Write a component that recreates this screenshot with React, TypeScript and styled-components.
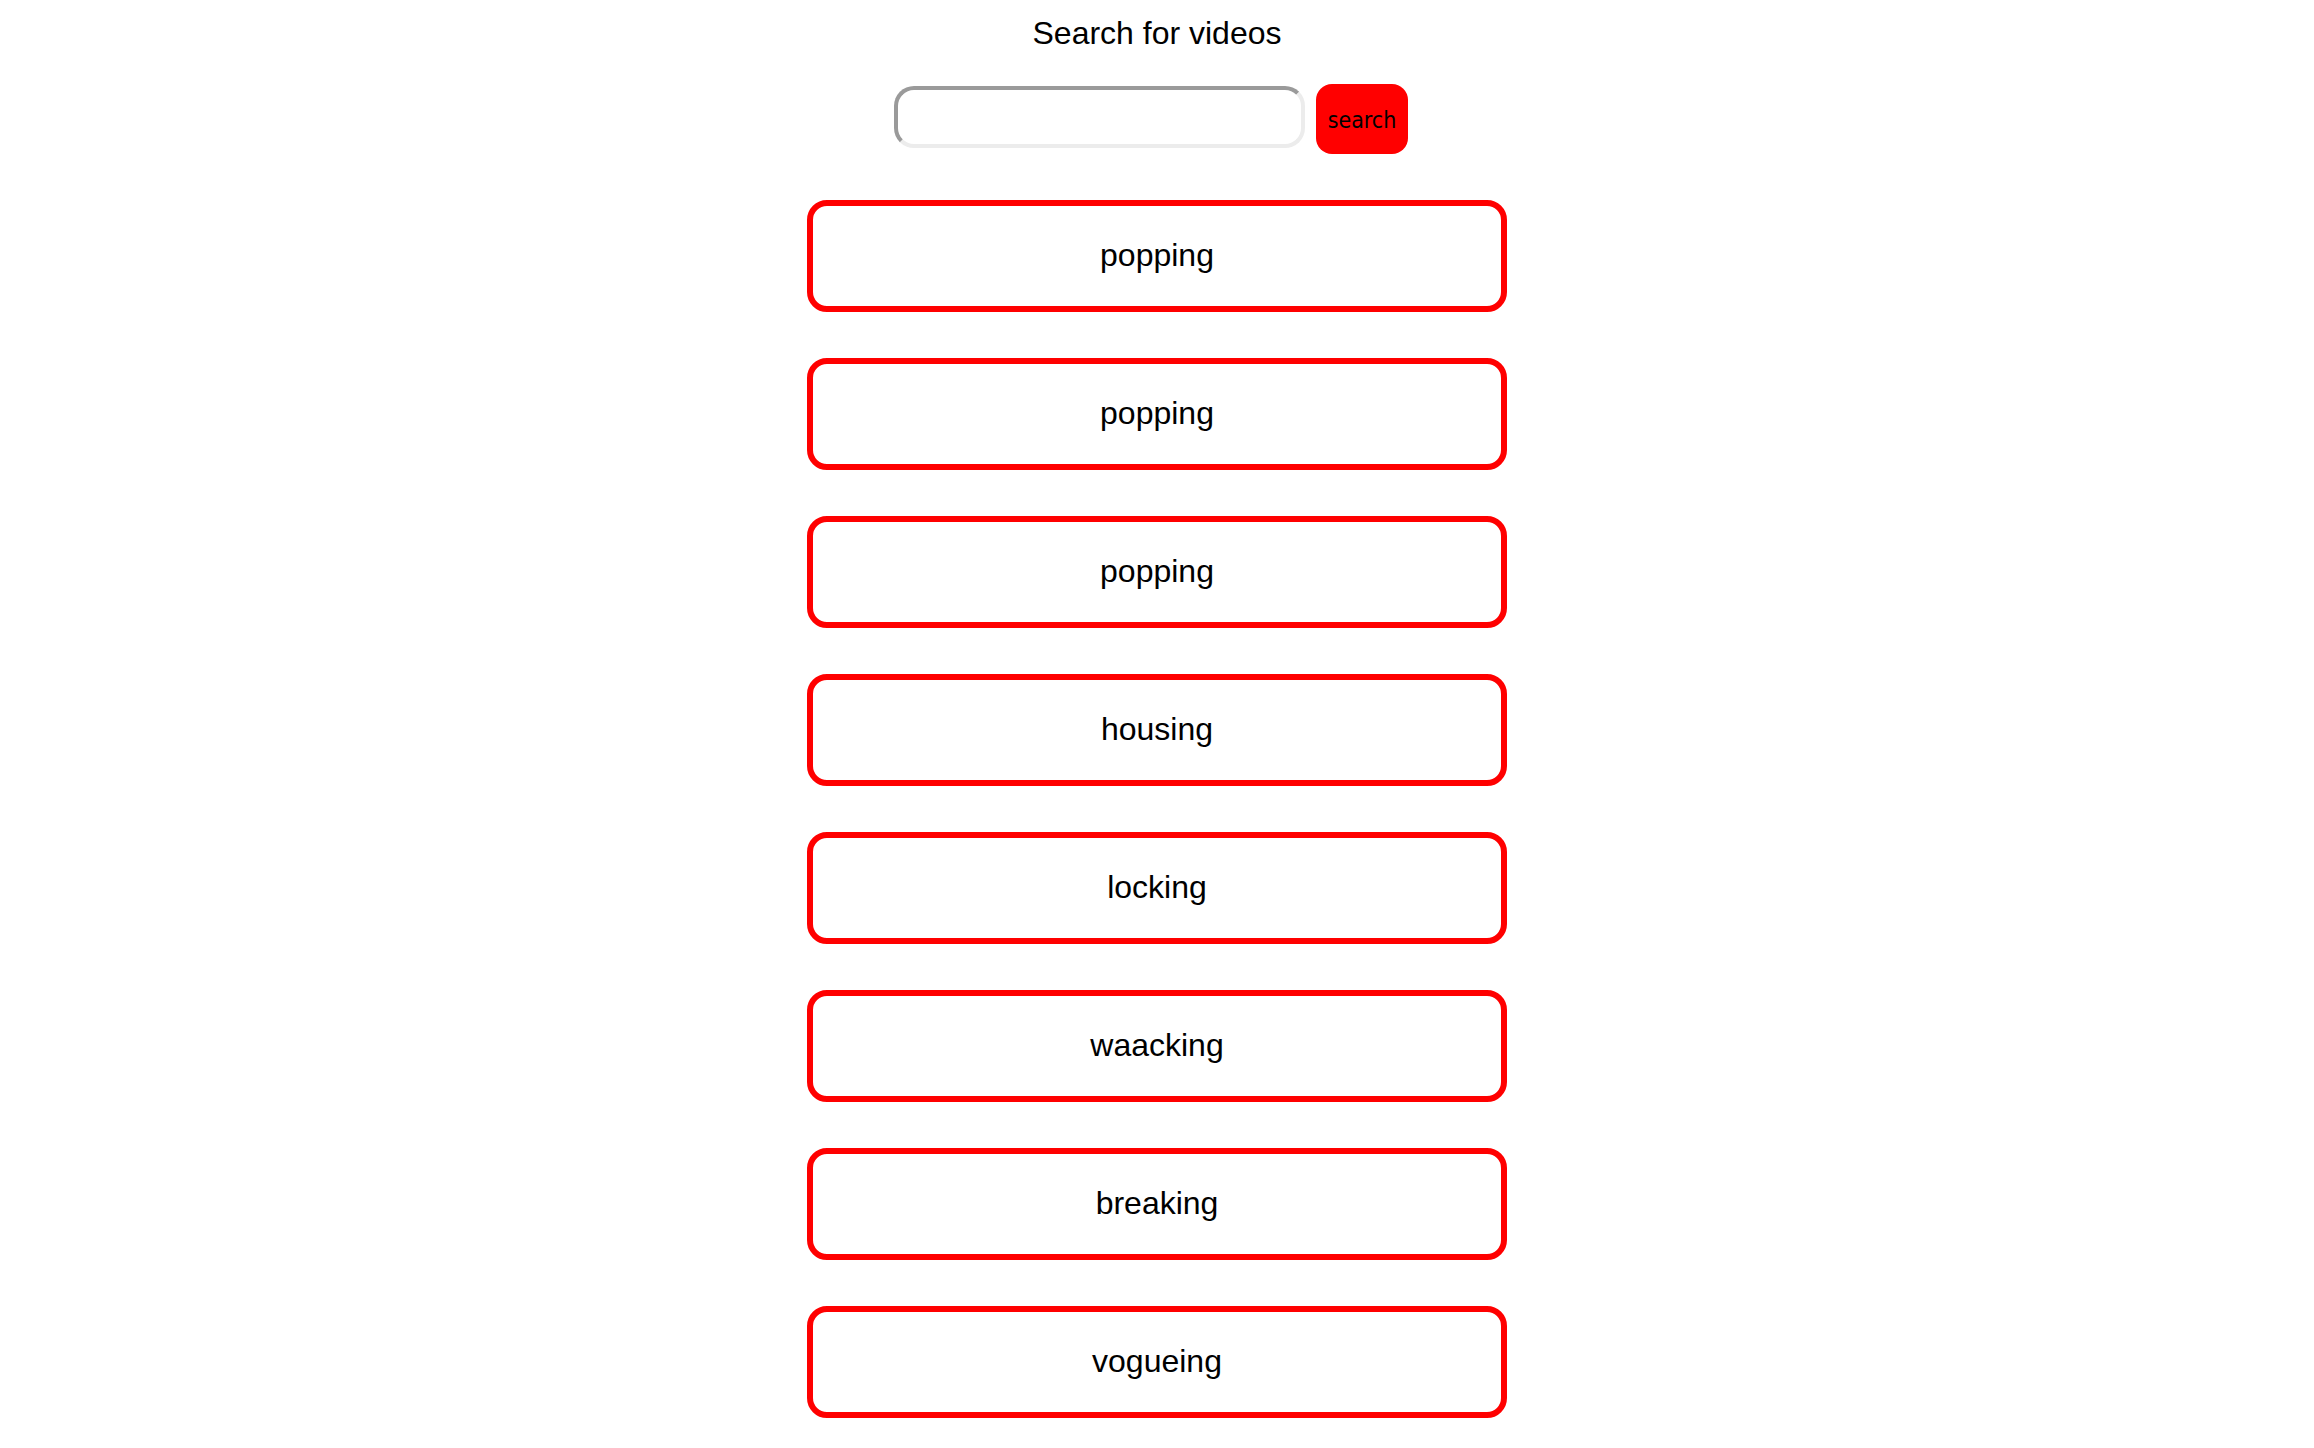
import React from "react";
import styled, { createGlobalStyle } from "styled-components";

const GlobalStyle = createGlobalStyle`
  html, body {
    margin: 0;
    padding: 0;
    background: #ffffff;
  }
  body {
    font-family: "Liberation Sans", Arial, Helvetica, sans-serif;
    color: #000000;
  }
  * {
    box-sizing: border-box;
  }
`;

const Page = styled.div`
  display: flex;
  flex-direction: column;
  align-items: stretch;
  padding-top: 15px;
`;

const Title = styled.div`
  font-family: "Liberation Sans", Arial, Helvetica, sans-serif;
  font-size: 32px;
  line-height: 37px;
  text-align: center;
  color: #000000;
`;

const SearchRow = styled.form`
  display: flex;
  justify-content: center;
  align-items: flex-start;
  gap: 11px;
  margin: 32px 0 0 0;
  padding-right: 12px;
`;

const SearchInput = styled.input`
  width: 411px;
  height: 62px;
  margin-top: 2px;
  padding: 0 12px;
  border-width: 4px;
  border-style: solid;
  border-color: #9a9a9a #ececec #ececec #9a9a9a;
  border-radius: 20px;
  background: #ffffff;
  font-family: "Liberation Sans", Arial, sans-serif;
  font-size: 26px;
  outline: none;
`;

const SearchButton = styled.button`
  width: 92px;
  height: 70px;
  padding: 2px 0 0 0;
  border: none;
  border-radius: 16px;
  background: #ff0000;
  color: #000000;
  font-family: "DejaVu Sans Condensed", "Liberation Sans", sans-serif;
  font-size: 23px;
  line-height: 1;
  text-align: center;
  cursor: pointer;
`;

const List = styled.div`
  display: flex;
  flex-direction: column;
  align-items: center;
  gap: 46px;
  margin-top: 46px;
`;

const VideoCard = styled.div`
  width: 700px;
  height: 112px;
  padding-bottom: 2px;
  border: 6px solid #ff0000;
  border-radius: 20px;
  display: flex;
  align-items: center;
  justify-content: center;
  font-family: "Liberation Sans", Arial, Helvetica, sans-serif;
  font-size: 32px;
  color: #000000;
  background: #ffffff;
`;

const videos = [
  "popping",
  "popping",
  "popping",
  "housing",
  "locking",
  "waacking",
  "breaking",
  "vogueing",
];

export default function App() {
  return (
    <>
      <GlobalStyle />
      <Page>
        <Title>Search for videos</Title>
        <SearchRow onSubmit={(e) => e.preventDefault()}>
          <SearchInput type="text" />
          <SearchButton type="submit">search</SearchButton>
        </SearchRow>
        <List>
          {videos.map((v, i) => (
            <VideoCard key={i}>{v}</VideoCard>
          ))}
        </List>
      </Page>
    </>
  );
}
